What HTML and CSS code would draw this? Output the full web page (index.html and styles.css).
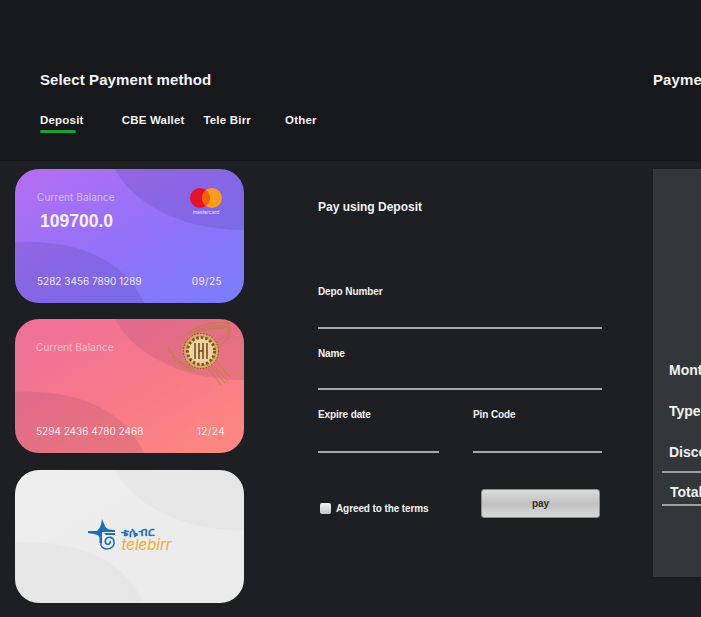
FILE: index.html
```html
<!DOCTYPE html>
<html lang="en">
<head>
    <meta charset="UTF-8">
    <title>Payment</title>
    <link rel="stylesheet" href="styles.css">
</head>
<body>
    <div class="top">
        <div class="top-left">
            <h1>Select Payment method</h1>
            <div class="tabs">
                <span class="tab active">Deposit</span>
                <span class="tab">CBE Wallet</span>
                <span class="tab">Tele Birr</span>
                <span class="tab">Other</span>
            </div>
        </div>
        <h1 class="top-right">Payment</h1>
    </div>

    <div class="main">
        <div class="cards">
            <div class="card card-purple">
                <svg class="card-shapes" viewBox="0 0 229 134" preserveAspectRatio="none">
                    <path d="M100 0C115 30 160 61 229 61V0Z"/>
                    <path d="M0 73C65 70 110 92 129 134H0Z"/>
                </svg>
                <div class="card-head">
                    <div>
                        <div class="card-label">Current Balance</div>
                        <div class="card-balance">109700.0</div>
                    </div>
                    <svg class="mastercard" width="36" height="30" viewBox="0 0 36 30">
                        <circle cx="11" cy="11" r="10" fill="#e8102a"/>
                        <circle cx="23" cy="11" r="10" fill="#f99c1c"/>
                        <path d="M17 3a10 10 0 0 1 0 16a10 10 0 0 1 0-16Z" fill="#f4600c"/>
                        <text x="17" y="26.500" text-anchor="middle">mastercard</text>
                    </svg>
                </div>
                <div class="card-foot">
                    <span>5282 3456 7890 1289</span>
                    <span class="card-date">09/25</span>
                </div>
            </div>

            <div class="card card-pink">
                <svg class="card-shapes" viewBox="0 0 229 134" preserveAspectRatio="none">
                    <path d="M100 0C115 30 160 61 229 61V0Z"/>
                    <path d="M0 73C65 70 110 92 129 134H0Z"/>
                </svg>
                <div class="card-head">
                    <div class="card-label">Current Balance</div>
                    <svg class="coin" width="64" height="64" viewBox="0 0 64 64">
                        <g fill="none" stroke="#b98345" stroke-width="1">
                            <path d="M15 17C24 6 44 0 60 2"/>
                            <path d="M20 14C30 7 44 4 58 5"/>
                            <path d="M24 12C32 9 46 7 56 8"/>
                            <path d="M36 9C44 7 52 6 62 6"/>
                            <path d="M50 20C60 14 62 8 60 2"/>
                            <path d="M52 24C60 20 62 14 62 6"/>
                            <path d="M2 30C8 40 16 44 22 44"/>
                            <path d="M0 26C6 38 16 47 26 48"/>
                            <path d="M4 36C10 44 18 50 28 50"/>
                            <path d="M46 44C50 50 56 56 60 60"/>
                            <path d="M43 46C49 52 53 58 57 62"/>
                            <path d="M40 48C46 54 50 60 53 64"/>
                            <path d="M49 41C54 46 58 52 62 56"/>
                        </g>
                        <circle cx="33" cy="30" r="17.500" fill="#d9aa62"/>
                        <circle cx="33" cy="30" r="17.500" fill="none" stroke="#6e4a20" stroke-width="1" stroke-dasharray="1.500 1.500"/>
                        <circle cx="33" cy="30" r="13.500" fill="#f0d4a0" stroke="#7c5626" stroke-width="3" stroke-dasharray="2.500 2"/>
                        <path d="M27 22V38M31 22V38M35 22V38M39 22V38M31 30H35" stroke="#6e4a20" stroke-width="1.500" fill="none"/>
                    </svg>
                </div>
                <div class="card-foot">
                    <span>5294 2436 4780 2468</span>
                    <span class="card-date">12/24</span>
                </div>
            </div>

            <div class="card card-white">
                <svg class="card-shapes" viewBox="0 0 229 134" preserveAspectRatio="none">
                    <path d="M100 0C115 30 160 61 229 61V0Z"/>
                    <path d="M0 73C65 70 110 92 129 134H0Z"/>
                </svg>
                <div class="telebirr">
                    <svg width="30" height="34" viewBox="0 0 30 34">
                        <path d="M15 1L18 8C19 11 23 12 28 12V14H8C12 12 14 9 15 1Z" fill="#1c6fb8"/>
                        <path d="M1 13H15V25H12.500V20C12.500 17 8 16 1 15Z" fill="#1c6fb8"/>
                        <path d="M14 24C13 28 16 31 20 31C25 31 28 27 27 23C26 19 21 18 19 21C17 24 19 27 22 26C23 25.500 24 24 23 23" fill="none" stroke="#1c6fb8" stroke-width="1.600"/>
                        <path d="M17 15H28V17H19Z" fill="#1c6fb8"/>
                    </svg>
                    <div class="telebirr-text">
                        <span class="telebirr-am">ቴሌብር</span>
                        <span class="telebirr-en">telebirr</span>
                    </div>
                </div>
            </div>
        </div>

        <div class="form">
            <h2>Pay using Deposit</h2>
            <div class="field field-depo">
                <label>Depo Number</label>
                <div class="line"></div>
            </div>
            <div class="field">
                <label>Name</label>
                <div class="line"></div>
            </div>
            <div class="field-row">
                <div class="field field-expire">
                    <label>Expire date</label>
                    <div class="line"></div>
                </div>
                <div class="field field-pin">
                    <label>Pin Code</label>
                    <div class="line"></div>
                </div>
            </div>
            <div class="form-foot">
                <div class="agree">
                    <span class="checkbox"></span>
                    <span>Agreed to the terms</span>
                </div>
                <button class="pay">pay</button>
            </div>
        </div>

        <div class="summary">
            <div class="summary-row">Month</div>
            <div class="summary-row">Type</div>
            <div class="summary-row">Discount</div>
            <div class="summary-line"></div>
            <div class="summary-row summary-total">Total</div>
            <div class="summary-line"></div>
        </div>
    </div>
</body>
</html>
```

FILE: styles.css
```css
html, body {
    margin: 0;
    height: 617px;
    overflow: hidden;
}
body {
    font-family: "Liberation Sans", Arial, sans-serif;
    background-color: #1d1f23;
    color: #f2f2f2;
    width: 701px;
}
h1, h2 {
    margin: 0;
}

/* Top band */
.top {
    display: flex;
    height: 161px;
    background-color: #17181c;
}
.top-left {
    flex: 0 0 653px;
    padding: 71px 0 0 40px;
    box-sizing: border-box;
}
.top h1 {
    font-size: 15px;
    line-height: 18px;
    letter-spacing: .1px;
    white-space: nowrap;
}
.top-right {
    padding-top: 71px;
}
.tabs {
    display: grid;
    grid-template-columns: repeat(4, 81.7px);
    margin-top: 24px;
}
.tab {
    font-size: 11.500px;
    font-weight: bold;
    line-height: 15px;
    letter-spacing: .2px;
    white-space: nowrap;
    padding-bottom: 4px;
}
.tab.active {
    position: relative;
}
.tab.active::after {
    content: "";
    position: absolute;
    left: 0;
    top: 17px;
    width: 36px;
    height: 3px;
    border-radius: 2px;
    background-color: #17a034;
}

/* Main area */
.main {
    display: flex;
    padding-top: 8px;
}
.cards {
    flex: 0 0 229px;
    margin-left: 15px;
    display: flex;
    flex-direction: column;
    gap: 16px;
}
.card {
    position: relative;
    height: 134px;
    border-radius: 24px;
    overflow: hidden;
    box-sizing: border-box;
    padding: 20px 22px 16px;
    display: flex;
    flex-direction: column;
    justify-content: space-between;
    font-family: Inter, "Liberation Sans", sans-serif;
}
.card-shapes {
    position: absolute;
    left: 0;
    top: 0;
    width: 100%;
    height: 100%;
}
.card-head, .card-foot {
    position: relative;
    display: flex;
    justify-content: space-between;
}
.card-purple {
    background: linear-gradient(150deg, #b56ef2 0%, #8f72f8 55%, #7a7efc 100%);
}
.card-purple .card-shapes path {
    fill: rgba(60, 40, 120, .15);
}
.card-pink {
    background: linear-gradient(150deg, #ee6f9a 0%, #f77a88 55%, #fc8a80 100%);
}
.card-pink .card-shapes path {
    fill: rgba(110, 50, 90, .13);
}
.card-white {
    background: linear-gradient(150deg, #efefef 0%, #ebebeb 50%, #eaeaea 100%);
    align-items: center;
    justify-content: center;
    padding: 0;
    margin-top: 1px;
    height: 133px;
}
.card-white .card-shapes path {
    fill: rgba(120, 120, 120, .04);
}
.card-label {
    font-size: 10px;
    line-height: 14px;
    margin-top: 1px;
    color: rgba(255, 255, 255, .55);
    letter-spacing: .1px;
}
.card-balance {
    font-family: "Liberation Sans", Arial, sans-serif;
    font-size: 17.500px;
    font-weight: bold;
    line-height: 20px;
    margin: 7px 0 0 3px;
    color: #f6f0ff;
}
.card-foot {
    font-size: 10px;
    line-height: 12px;
    color: rgba(255, 255, 255, .88);
}
.card-date {
    letter-spacing: .4px;
}
.mastercard {
    margin: -2px -3px 0 0;
}
.mastercard text {
    font-family: Inter, sans-serif;
    font-size: 5px;
    fill: #f0e6ff;
}
.card-pink .card-head {
    height: 20px;
}
.card-pink .card-label {
    margin-left: -1px;
}
.coin {
    position: absolute;
    right: -10px;
    top: -18px;
}
.card-pink .card-foot {
    margin: 0 -3px 0 -1px;
}

/* telebirr logo */
.telebirr {
    position: relative;
    display: flex;
    align-items: flex-end;
    gap: 4px;
    margin-top: -3px;
}
.telebirr-text {
    display: flex;
    flex-direction: column;
    margin-bottom: 1px;
}
.telebirr-am {
    display: block;
    font-size: 12px;
    line-height: 13px;
    font-weight: bold;
    color: #1c6fb8;
}
.telebirr-en {
    display: block;
    font-size: 15px;
    line-height: 13px;
    font-style: italic;
    color: #f0ad25;
}

/* Form */
.form {
    flex: 0 0 284px;
    margin-left: 74px;
    font-weight: bold;
}
.form h2 {
    font-size: 12px;
    line-height: 14px;
    margin: 31px 0 0;
}
.field label {
    display: block;
    font-size: 10px;
    letter-spacing: -.1px;
    line-height: 12px;
}
.line {
    height: 2px;
    margin-top: 28px;
    background-color: #a8a8a8;
}
.field {
    margin-top: 19px;
}
.field-depo {
    margin-top: 72px;
}
.field-depo .line {
    margin-top: 29px;
}
.field-row {
    display: flex;
    justify-content: space-between;
}
.field-row .line {
    margin-top: 30px;
}
.field-expire {
    width: 121px;
}
.field-pin {
    width: 129px;
}
.form-foot {
    display: flex;
    justify-content: space-between;
    align-items: center;
    margin: 36px 2px 0 2px;
}
.agree {
    display: flex;
    align-items: center;
    gap: 5px;
    font-size: 10px;
    letter-spacing: -.1px;
    margin-top: 10px;
}
.checkbox {
    width: 11px;
    height: 11px;
    border-radius: 2px;
    background: linear-gradient(#f2f2f2, #c4c4c4);
}
.pay {
    width: 119px;
    height: 29px;
    border: 1px solid #8c8c8c;
    border-radius: 3px;
    background: linear-gradient(#dcdcdc, #c2c2c2 50%, #d8d8d8);
    color: #2c2c2c;
    font-family: "Liberation Sans", Arial, sans-serif;
    font-size: 10px;
    font-weight: bold;
    padding: 0;
}

/* Summary panel */
.summary {
    flex: 0 0 300px;
    height: 408px;
    margin-left: 51px;
    box-sizing: border-box;
    padding: 192px 0 0 9px;
    background-color: #33373a;
    font-size: 14px;
    font-weight: bold;
    color: #f0f0f0;
}
.summary-row {
    line-height: 18px;
    margin: 0 0 23px 7px;
    white-space: nowrap;
}
.summary-line {
    height: 2px;
    background-color: #a0a0a0;
}
.summary-row:nth-child(3) {
    margin-bottom: 10px;
}
.summary-total {
    margin: 10px 0 3px 8px;
}
```
